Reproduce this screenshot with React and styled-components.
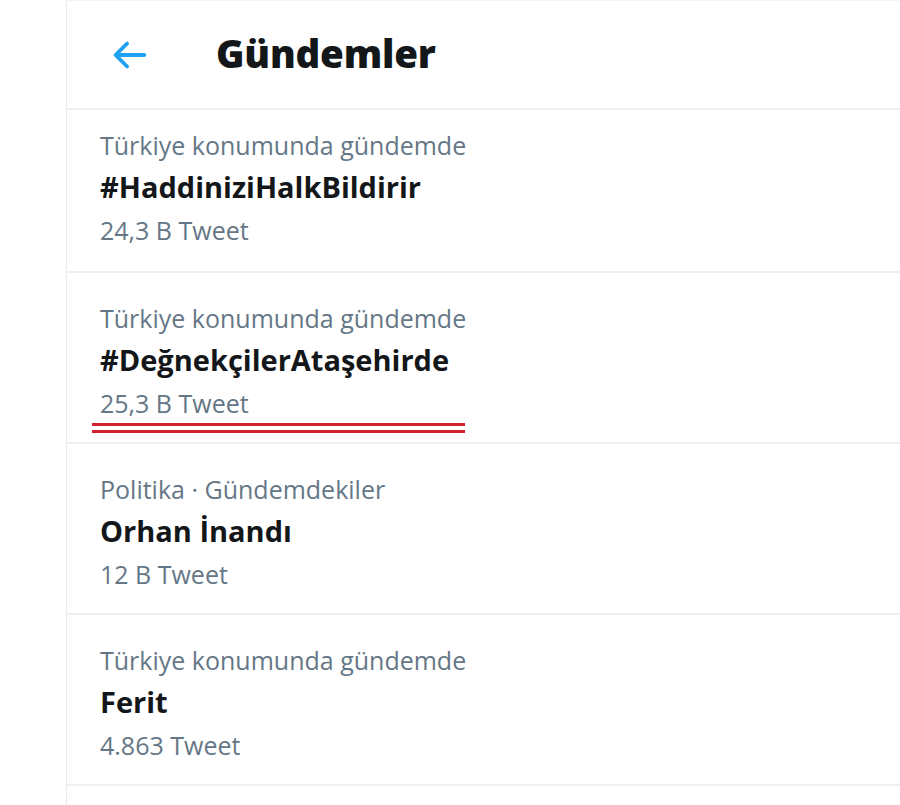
import React from 'react';
import styled, { createGlobalStyle } from 'styled-components';

const GlobalStyle = createGlobalStyle`
  html, body {
    margin: 0;
    padding: 0;
    background: #fff;
  }
  body {
    font-family: "Open Sans", "Noto Sans", sans-serif;
    color: #14171a;
  }
`;

const Page = styled.div`
  display: flex;
  width: 900px;
  height: 805px;
  overflow: hidden;
  background: #fff;
`;

const SideGap = styled.div`
  width: 66px;
  flex-shrink: 0;
`;

const Column = styled.main`
  flex: 1;
  border-left: 1.5px solid #e9edf0;
  border-top: 1px solid #f3f5f6;
`;

const Header = styled.header`
  height: 107px;
  display: flex;
  align-items: center;
  border-bottom: 2px solid #edf0f2;
`;

const BackButton = styled.button`
  display: flex;
  align-items: center;
  justify-content: center;
  width: 46px;
  height: 46px;
  margin-left: 39px;
  padding: 0;
  border: none;
  background: transparent;
  color: #1da1f2;
  cursor: pointer;
`;

const HeaderTitle = styled.h1`
  margin: 0 0 4px 64px;
  font-size: 38.5px;
  font-weight: 800;
  letter-spacing: -0.2px;
  color: #14171a;
`;

const TrendRow = styled.div`
  position: relative;
  padding: ${({ $first }) => ($first ? '14px 33px 19px' : '24px 33px 17px')};
  border-bottom: 2px solid #edf0f2;
`;

const Meta = styled.div`
  font-size: 25px;
  line-height: 42px;
  color: #657786;
`;

const TrendName = styled.div`
  font-size: 29px;
  line-height: 42px;
  font-weight: 700;
  color: #14171a;
`;

const Count = styled.div`
  font-size: 25px;
  line-height: 44px;
  color: #657786;
`;

const Underline = styled.div`
  position: absolute;
  left: 25px;
  top: 150px;
  width: 373px;
  display: flex;
  flex-direction: column;
  gap: 4px;

  &::before,
  &::after {
    content: '';
    height: 3px;
    background: #d42232;
  }
`;

const trends = [
  { meta: 'Türkiye konumunda gündemde', name: '#HaddiniziHalkBildirir', count: '24,3 B Tweet' },
  { meta: 'Türkiye konumunda gündemde', name: '#DeğnekçilerAtaşehirde', count: '25,3 B Tweet', marked: true },
  { meta: 'Politika · Gündemdekiler', name: 'Orhan İnandı', count: '12 B Tweet' },
  { meta: 'Türkiye konumunda gündemde', name: 'Ferit', count: '4.863 Tweet' },
];

const BackIcon = () => (
  <svg viewBox="0 0 24 24" width="46" height="46" fill="currentColor">
    <path d="M20 11H7.414l4.293-4.293c.39-.39.39-1.023 0-1.414s-1.023-.39-1.414 0l-6 6c-.39.39-.39 1.023 0 1.414l6 6c.195.195.45.293.707.293s.512-.098.707-.293c.39-.39.39-1.023 0-1.414L7.414 13H20c.553 0 1-.447 1-1s-.447-1-1-1z" />
  </svg>
);

const App = () => {
  return (
    <Page>
      <GlobalStyle />
      <SideGap />
      <Column>
        <Header>
          <BackButton aria-label="Geri">
            <BackIcon />
          </BackButton>
          <HeaderTitle>Gündemler</HeaderTitle>
        </Header>
        {trends.map((t, i) => (
          <TrendRow key={t.name} $first={i === 0}>
            <Meta>{t.meta}</Meta>
            <TrendName>{t.name}</TrendName>
            <Count>{t.count}</Count>
            {t.marked && <Underline />}
          </TrendRow>
        ))}
      </Column>
    </Page>
  );
};

export default App;
